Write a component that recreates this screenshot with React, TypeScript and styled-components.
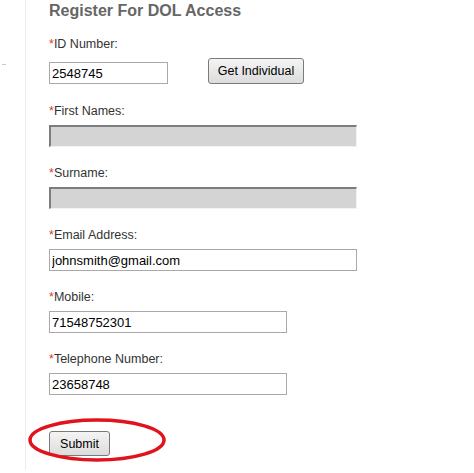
import React from "react";
import styled, { createGlobalStyle } from "styled-components";

const Global = createGlobalStyle`
  html, body { margin: 0; padding: 0; background: #ffffff; }
  body { font-family: "Liberation Sans", Arial, sans-serif; }
  * { box-sizing: border-box; }
`;

const Page = styled.div`
  display: flex;
  width: 474px;
  height: 473px;
  overflow: hidden;
`;

const Sidebar = styled.div`
  width: 25px;
  flex: none;
  padding-top: 64px;
  padding-left: 2px;
`;

const Dash = styled.div`
  width: 4px;
  height: 1px;
  background: #c8c8c8;
`;

const Content = styled.div`
  flex: 1;
  height: 470px;
  border-left: 1px solid #ececec;
  padding: 2px 0 0 23px;
  display: flex;
  flex-direction: column;
`;

const Title = styled.h2`
  margin: 0 0 16px;
  font-size: 16px;
  line-height: 18px;
  font-weight: bold;
  color: #666666;
`;

const Field = styled.div<{ $after?: number }>`
  display: flex;
  flex-direction: column;
  margin-bottom: ${(p) => p.$after ?? 18}px;
`;

const Label = styled.label`
  font-size: 12.5px;
  line-height: 16px;
  color: #333333;
  margin-bottom: 6px;
`;

const Star = styled.span`
  color: #d0421b;
`;

const Row = styled.div`
  display: flex;
  align-items: flex-end;
  gap: 40px;
`;

const Input = styled.input<{ $w: number }>`
  width: ${(p) => p.$w}px;
  height: 22px;
  margin: 0;
  padding: 1px 2px;
  border: 1px solid #a9a9a9;
  background: #ffffff;
  font-family: "Liberation Sans", Arial, sans-serif;
  font-size: 13px;
  color: #000000;
  outline: none;
  &:disabled {
    background: #d4d4d4;
    border-top: 2px solid #7d7d7d;
    border-left: 2px solid #7d7d7d;
    border-right: 1px solid #f2f2f2;
    border-bottom: 1px solid #f2f2f2;
  }
`;

const Button = styled.button<{ $w: number; $h: number }>`
  width: ${(p) => p.$w}px;
  height: ${(p) => p.$h}px;
  margin: 0;
  padding: 0;
  border: 1px solid #7a7a7a;
  border-radius: 3px;
  background: linear-gradient(#f4f4f4, #dcdcdc);
  font-family: "Liberation Sans", Arial, sans-serif;
  font-size: 12.5px;
  color: #000000;
`;

const SubmitWrap = styled.div`
  position: relative;
  margin-top: 18px;
  width: 61px;
`;

const Circle = styled.svg`
  position: absolute;
  left: -21px;
  top: -13px;
  overflow: visible;
  pointer-events: none;
`;

const fields: { label: string; value: string; w: number; disabled?: boolean }[] = [
  { label: "First Names:", value: "", w: 308, disabled: true },
  { label: "Surname:", value: "", w: 308, disabled: true },
  { label: "Email Address:", value: "johnsmith@gmail.com", w: 308 },
  { label: "Mobile:", value: "71548752301", w: 238 },
  { label: "Telephone Number:", value: "23658748", w: 238 },
];

export default function App() {
  return (
    <>
      <Global />
      <Page>
        <Sidebar>
          <Dash />
        </Sidebar>
        <Content>
          <Title>Register For DOL Access</Title>
          <Field $after={19}>
            <Label>
              <Star>*</Star>ID Number:
            </Label>
            <Row>
              <Input $w={119} defaultValue="2548745" />
              <Button $w={96} $h={26}>Get Individual</Button>
            </Row>
          </Field>
          {fields.map((f) => (
            <Field key={f.label}>
              <Label>
                <Star>*</Star>
                {f.label}
              </Label>
              <Input $w={f.w} defaultValue={f.value} disabled={f.disabled} />
            </Field>
          ))}
          <SubmitWrap>
            <Button $w={61} $h={25}>Submit</Button>
            <Circle width="140" height="46" viewBox="0 0 140 46">
              <ellipse cx="69" cy="22" rx="67" ry="20" fill="none" stroke="#e1141d" strokeWidth="3.5" />
            </Circle>
          </SubmitWrap>
        </Content>
      </Page>
    </>
  );
}
